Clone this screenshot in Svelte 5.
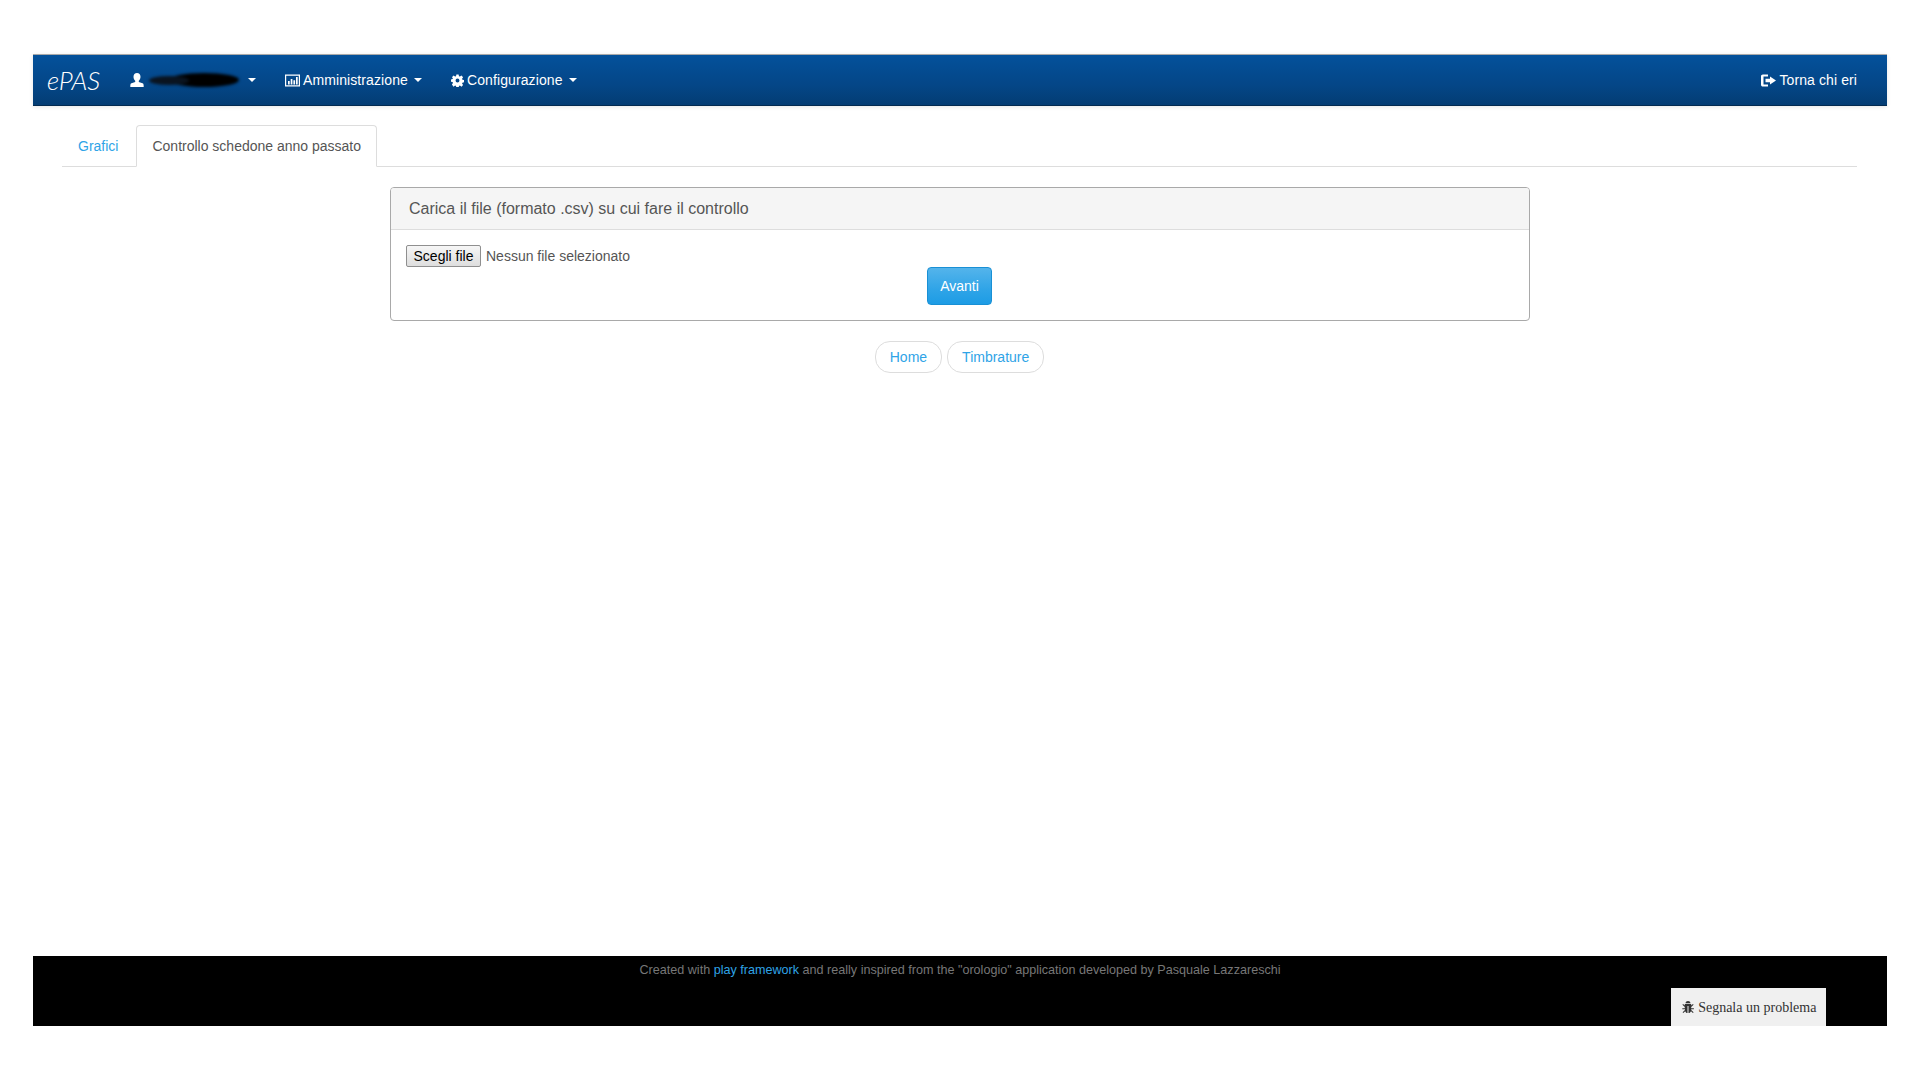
<script lang="ts">
  const navMenus = [
    { label: "Amministrazione", icon: "stats" },
    { label: "Configurazione", icon: "cog" }
  ];
</script>

{#snippet icon(name: string)}
  {#if name === "user"}
    <svg class="icon" viewBox="0 0 14 14" aria-hidden="true">
      <path fill="currentColor" d="M7 0c2.200 0 3.500 1.600 3.500 3.800 0 1.600-.7 3.100-1.700 3.900v1.200l3.700 1.400c1 .4 1.200 1 1.200 3.700H.3c0-2.700.2-3.300 1.200-3.700l3.700-1.400V7.700C4.200 6.900 3.500 5.400 3.500 3.800 3.500 1.600 4.800 0 7 0z" />
    </svg>
  {:else if name === "stats"}
    <svg class="icon icon--wide" viewBox="0 0 15 13" aria-hidden="true">
      <path fill="currentColor" fill-rule="evenodd" d="M0 .5h15v12H0zM1.200 1.700v9.600h12.600V1.700z" />
      <path fill="currentColor" d="M3 7h1.700v3.500H3zM5.700 5h1.700v5.500H5.700zM8.400 6.300h1.700v4.200H8.400zM11 3h1.700v7.500H11z" />
    </svg>
  {:else if name === "cog"}
    <svg class="icon icon--cog" viewBox="0 0 14 14" aria-hidden="true">
      <path fill="currentColor" fill-rule="evenodd" d="M5.800.5h2.400l.4 1.900 1 .4L11.300 1.700l1.700 1.700-1.100 1.700.4 1 1.900.4v2.400l-1.900.4-.4 1 1.100 1.600-1.700 1.700-1.700-1.100-1 .4-.4 1.900H5.800l-.4-1.900-1-.4-1.700 1.100L1 11.300l1.100-1.600-.4-1-1.900-.4V5.900l1.900-.4.4-1L1 3.400l1.700-1.700 1.700 1.100 1-.4zM7 4.900a2.100 2.100 0 1 0 0 4.200 2.100 2.100 0 0 0 0-4.200z" />
    </svg>
  {:else if name === "logout"}
    <svg class="icon icon--wide" viewBox="0 0 15 13" aria-hidden="true">
      <path fill="currentColor" d="M1.800.5H7v2H2.500v8H7v2H1.800C.8 12.500 0 11.700 0 10.700V2.300C0 1.300.8.500 1.800.5z" />
      <path fill="currentColor" d="M9 2.500l6 4-6 4V8.300H4.500V4.700H9z" />
    </svg>
  {:else if name === "bug"}
    <svg class="icon icon--bug" viewBox="0 0 14 14" aria-hidden="true">
      <path fill="currentColor" d="M4.500 3.200C4.700 1.800 5.700 1 7 1s2.300.8 2.500 2.200zM3.800 4h6.400v1.600l1.700-1.500.7.700-2.400 2.100v1.300h2.700v1h-2.700v.9l2.400 2.200-.7.700-1.900-1.800C9.300 12.500 8.400 13 7.500 13V6H6.500v7c-.9 0-1.800-.5-2.300-1.800l-1.900 1.800-.7-.7 2.400-2.200v-.9H1.300v-1H3.800V6.900L1.400 4.800l.7-.7 1.700 1.500z" />
    </svg>
  {/if}
{/snippet}

<div class="page">
  <nav class="navbar">
    <span class="brand">ePAS</span>
    <a class="nav-link" href="#user">
      {@render icon("user")}
      <span class="username"><span class="username__blot"></span></span>
      <span class="caret"></span>
    </a>
    {#each navMenus as menu}
      <a class="nav-link" href="#menu">
        {@render icon(menu.icon)}
        {menu.label}
        <span class="caret"></span>
      </a>
    {/each}
    <a class="nav-link nav-link--right" href="#back">
      {@render icon("logout")}
      Torna chi eri
    </a>
  </nav>

  <main class="content">
    <ul class="tabs">
      <li><a class="tab" href="#grafici">Grafici</a></li>
      <li><a class="tab tab--active" href="#controllo">Controllo schedone anno passato</a></li>
    </ul>

    <section class="panel">
      <h3 class="panel__head">Carica il file (formato .csv) su cui fare il controllo</h3>
      <form class="panel__body">
        <div class="file-row">
          <button type="button" class="file-btn">Scegli file</button>
          <span>Nessun file selezionato</span>
        </div>
        <div class="submit-row">
          <button type="button" class="btn-primary">Avanti</button>
        </div>
      </form>
    </section>

    <div class="pills">
      <a class="pill" href="#home">Home</a>
      <a class="pill" href="#timbrature">Timbrature</a>
    </div>
  </main>

  <footer class="footer">
    <p class="footer__text">
      Created with <a href="#play">play framework</a> and really inspired from the "orologio" application developed by Pasquale Lazzareschi
    </p>
    <div class="footer__actions">
      <button type="button" class="report">{@render icon("bug")} Segnala un problema</button>
    </div>
  </footer>
</div>

<style>
  :global(body) {
    font-family: "Liberation Sans", Arial, sans-serif;
    font-size: 14px;
    line-height: 20px;
    color: #555;
    background: #fff;
  }

  a {
    text-decoration: none;
    color: #2fa4e7;
  }

  .page {
    box-sizing: border-box;
    display: flex;
    flex-direction: column;
    height: 1026px;
    margin: 0 33px;
    padding-top: 54px;
  }

  .navbar {
    box-sizing: border-box;
    display: flex;
    align-items: center;
    height: 52px;
    padding: 0 30px 0 14px;
    background: linear-gradient(#04519b, #044687 60%, #033c73);
    border-top: 1px solid #a9a9a9;
    border-bottom: 1px solid #022a50;
    box-shadow: 0 1px 4px rgba(0, 0, 0, 0.1);
    color: #fff;
  }

  .brand {
    width: 83px;
    font-family: "Lato", sans-serif;
    font-style: italic;
    font-weight: 300;
    font-size: 26px;
    color: #fff;
  }

  .nav-link {
    display: flex;
    align-items: center;
    gap: 3px;
    margin-right: 29px;
    letter-spacing: 0.1px;
    color: #fff;
  }

  .nav-link--right {
    margin: 0 0 0 auto;
  }

  .icon {
    width: 14px;
    height: 14px;
    flex: none;
  }

  .icon--wide {
    width: 15px;
    height: 13px;
  }

  .icon--cog {
    width: 13px;
    height: 13px;
  }

  .icon--bug {
    width: 14px;
    height: 14px;
    vertical-align: -2px;
  }

  .username {
    position: relative;
    display: block;
    width: 95px;
    height: 20px;
  }

  .username__blot {
    position: absolute;
    left: 22px;
    right: 3px;
    top: 3px;
    height: 14px;
    border-radius: 50%;
    background: #000;
    filter: blur(1.5px);
  }

  .username__blot::before {
    content: "";
    position: absolute;
    left: -20px;
    width: 40px;
    top: 3px;
    height: 9px;
    border-radius: 50%;
    background: #0a1420;
  }

  .caret {
    width: 0;
    height: 0;
    margin-left: 3px;
    border-top: 4px solid #fff;
    border-left: 4px solid transparent;
    border-right: 4px solid transparent;
  }

  .content {
    flex: 1;
    padding: 19px 30px 0;
  }

  .tabs {
    display: flex;
    gap: 2px;
    margin: 0 0 0 -1px;
    padding: 0;
    list-style: none;
    border-bottom: 1px solid #ddd;
  }

  .tab {
    display: block;
    margin-bottom: -1px;
    padding: 10px 15px;
    border: 1px solid transparent;
    border-radius: 4px 4px 0 0;
    line-height: 20px;
  }

  .tab--active {
    color: #555;
    background: #fff;
    border-color: #ddd #ddd #fff;
  }

  .panel {
    width: 1138px;
    margin: 20px auto 0;
    border: 1px solid #a9a9a9;
    border-radius: 4px;
  }

  .panel__head {
    margin: 0;
    padding: 11px 18px 10px;
    font-size: 16px;
    font-weight: 400;
    line-height: 20px;
    color: #555;
    background: #f5f5f5;
    border-bottom: 1px solid #ddd;
    border-radius: 3px 3px 0 0;
  }

  .panel__body {
    padding: 15px;
  }

  .file-row {
    display: flex;
    align-items: center;
    gap: 5px;
    height: 22px;
  }

  .file-btn {
    box-sizing: border-box;
    width: 75px;
    height: 22px;
    padding: 0;
    font: 14px "Liberation Sans", Arial, sans-serif;
    color: #000;
    background: linear-gradient(#f6f6f6, #dedede);
    border: 1px solid #8f8f8f;
    border-radius: 2px;
  }

  .submit-row {
    display: flex;
    justify-content: center;
  }

  .btn-primary {
    box-sizing: border-box;
    width: 65px;
    height: 38px;
    margin-right: 1px;
    padding: 0;
    font: 14px "Liberation Sans", Arial, sans-serif;
    color: #fff;
    background: linear-gradient(#54b4eb, #2fa4e7 60%, #1d9ce5);
    border: 1px solid #1990d5;
    border-radius: 4px;
  }

  .pills {
    display: flex;
    justify-content: center;
    gap: 5px;
    margin-top: 20px;
    padding-right: 1px;
  }

  .pill {
    padding: 5px 14px;
    border: 1px solid #ddd;
    border-radius: 15px;
    line-height: 20px;
  }

  .footer {
    display: flex;
    flex-direction: column;
    justify-content: space-between;
    height: 70px;
    background: #000;
    color: #777;
  }

  .footer__text {
    margin: 6px 0 0;
    font-size: 12.6px;
    line-height: 17px;
    text-align: center;
  }

  .footer__actions {
    display: flex;
    justify-content: flex-end;
    padding-right: 61px;
  }

  .report {
    box-sizing: border-box;
    width: 155px;
    height: 38px;
    padding: 2px 0 0;
    font: 14px "Liberation Serif", "Times New Roman", serif;
    color: #333;
    background: #f0f0f0;
    border: 0;
  }
</style>
